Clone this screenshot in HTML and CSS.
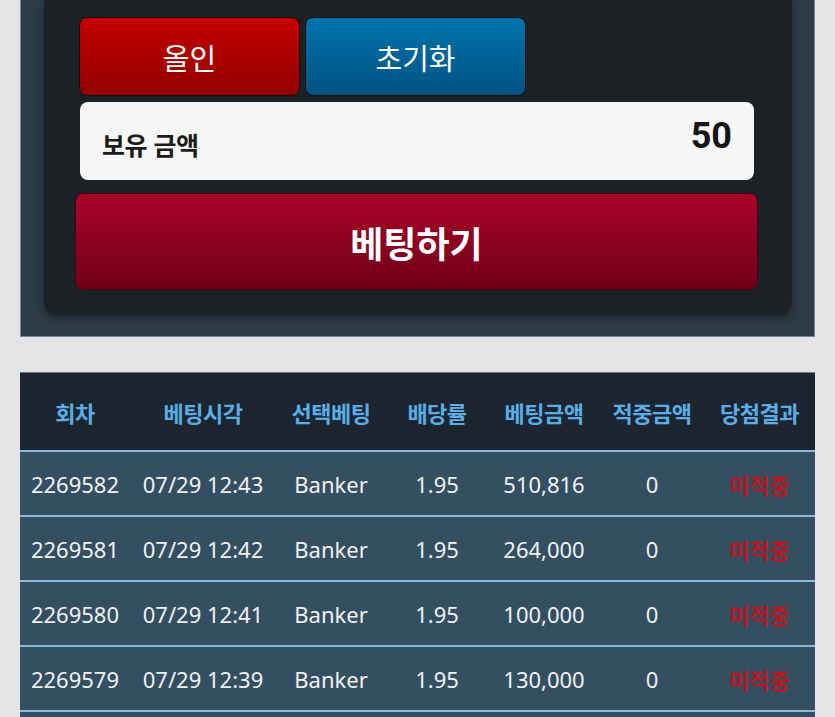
FILE: index.html
```html
<!DOCTYPE html>
<html lang="ko">
<head>
    <meta charset="UTF-8">
    <meta name="viewport" content="width=device-width, initial-scale=1.0">
    <title>베팅</title>
    <link rel="stylesheet" href="styles.css">
</head>
<body>
    <div class="page">
        <div class="bet-panel">
            <div class="bet-card">
                <div class="quick-btns">
                    <button class="quick-btn allin">올인</button>
                    <button class="quick-btn reset">초기화</button>
                </div>

                <div class="balance-box">
                    <span class="balance-label">보유 금액</span>
                    <span class="balance-value">50</span>
                </div>

                <button class="bet-btn">베팅하기</button>
            </div>
        </div>

        <div class="history">
            <div class="history-row history-head">
                <div>회차</div>
                <div>베팅시각</div>
                <div>선택베팅</div>
                <div>배당률</div>
                <div>베팅금액</div>
                <div>적중금액</div>
                <div>당첨결과</div>
            </div>
            <div class="history-row">
                <div>2269582</div>
                <div>07/29 12:43</div>
                <div>Banker</div>
                <div>1.95</div>
                <div>510,816</div>
                <div>0</div>
                <div class="result lose">미적중</div>
            </div>
            <div class="history-row">
                <div>2269581</div>
                <div>07/29 12:42</div>
                <div>Banker</div>
                <div>1.95</div>
                <div>264,000</div>
                <div>0</div>
                <div class="result lose">미적중</div>
            </div>
            <div class="history-row">
                <div>2269580</div>
                <div>07/29 12:41</div>
                <div>Banker</div>
                <div>1.95</div>
                <div>100,000</div>
                <div>0</div>
                <div class="result lose">미적중</div>
            </div>
            <div class="history-row">
                <div>2269579</div>
                <div>07/29 12:39</div>
                <div>Banker</div>
                <div>1.95</div>
                <div>130,000</div>
                <div>0</div>
                <div class="result lose">미적중</div>
            </div>
        </div>
    </div>
</body>
</html>
```

FILE: styles.css
```css
html, body {
    margin: 0;
    padding: 0;
    background: #e5e5e5;
    font-family: "Noto Sans", "Noto Sans CJK KR", sans-serif;
    overflow: hidden;
}

.page {
    padding: 0 20px;
}

/* top betting panel */
.bet-panel {
    background: #2f3b46;
    border: 1px solid #75889a;
    border-top: none;
    padding: 0 22px 21px 23px;
}

.bet-card {
    background: #1c2126;
    border-radius: 0 0 12px 12px;
    box-shadow: 0 4px 8px rgba(0, 0, 0, 0.35);
    padding: 17px 38px 25px 35px;
}

.quick-btns {
    display: flex;
    gap: 5px;
}

.quick-btn {
    width: 221px;
    height: 79px;
    border: 1px solid #111;
    border-radius: 8px;
    color: #fff;
    font-family: "Noto Sans CJK KR", sans-serif;
    font-size: 29px;
    cursor: pointer;
}

.quick-btn.allin {
    background: linear-gradient(#c40000, #940000);
}

.quick-btn.reset {
    background: linear-gradient(#0073ad, #005383);
}

.balance-box {
    margin-top: 6px;
    margin-left: 1px;
    height: 78px;
    background: #f7f7f7;
    border-radius: 8px;
    display: flex;
    align-items: center;
    justify-content: space-between;
    padding: 0 22px 0 22px;
}

.balance-label {
    font-family: "Noto Sans CJK KR", sans-serif;
    font-weight: 700;
    font-size: 25px;
    color: #1b1b1b;
    margin-top: 6px;
    letter-spacing: -0.5px;
}

.balance-value {
    font-family: "Roboto", sans-serif;
    font-weight: 700;
    font-size: 36px;
    color: #151515;
    margin-top: -10px;
}

.bet-btn {
    display: block;
    width: calc(100% + 8px);
    margin: 13px -4px 0 -4px;
    height: 97px;
    border: 1px solid #4a0010;
    border-radius: 8px;
    background: linear-gradient(#ab0329, #6e0018);
    color: #fff;
    font-family: "Noto Sans CJK KR", sans-serif;
    font-weight: 700;
    font-size: 36px;
    cursor: pointer;
}

/* history table */
.history {
    margin-top: 35px;
    border-top: 1px solid #6a7a88;
    background: #344f62;
    padding-bottom: 20px;
}

.history-row {
    display: grid;
    grid-template-columns: 110px 146px 110px 102px 112px 104px 111px;
    height: 63px;
    align-items: center;
    text-align: center;
    background: #344f62;
    border-bottom: 2px solid #8abbdc;
    color: #f2f2f2;
    font-size: 22px;
    white-space: nowrap;
}

.history-head {
    height: 77px;
    background: #1c2530;
    color: #5aaee6;
    font-family: "Noto Sans CJK KR", sans-serif;
    font-weight: 700;
    font-size: 22px;
    letter-spacing: -0.5px;
}

.result.lose {
    color: #c0151c;
    font-family: "Noto Sans CJK KR", sans-serif;
    font-weight: 700;
}
```
